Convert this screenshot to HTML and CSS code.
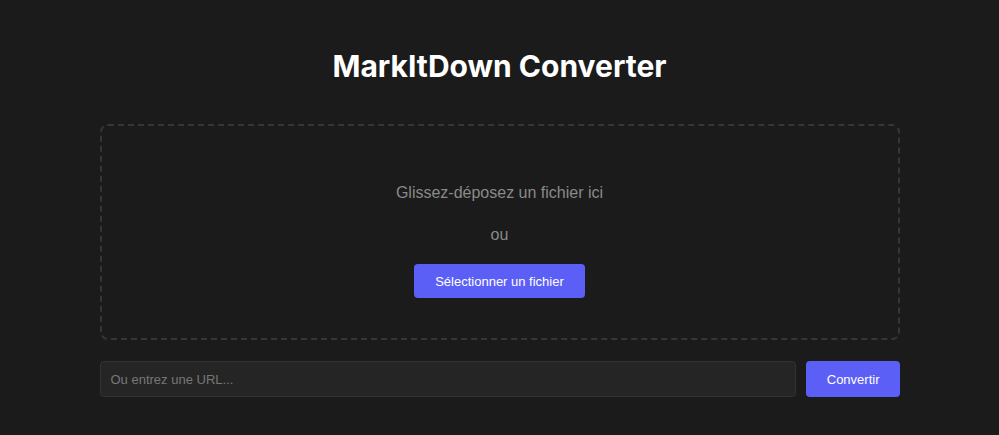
FILE: index.html
```html
<!DOCTYPE html>
<html lang="fr">
<head>
  <meta charset="UTF-8" />
  <title>MarkItDown Converter</title>
  <link rel="stylesheet" href="styles.css">
</head>
<body>

<div class="container">
  <h1>MarkItDown Converter</h1>

  <div class="dropzone" id="dropzone">
    <p class="drop-text">Glissez-déposez un fichier ici</p>
    <p class="drop-or">ou</p>
    <button class="btn btn-file" type="button">Sélectionner un fichier</button>
  </div>

  <div class="url-row">
    <input class="url-input" type="text" placeholder="Ou entrez une URL...">
    <button class="btn btn-convert" type="button">Convertir</button>
  </div>
</div>

</body>
</html>
```

FILE: styles.css
```css
* { box-sizing: border-box; }
body {
  margin: 0;
  background: #1b1b1b;
  font-family: 'Liberation Sans', Arial, sans-serif;
  color: #fff;
}

.container {
  width: 800px;
  margin: 0 auto;
}

h1 {
  font-family: Inter, 'Liberation Sans', sans-serif;
  font-size: 30px;
  font-weight: 700;
  line-height: 38px;
  text-align: center;
  margin: 47px 0 39px;
}

.dropzone {
  border: 2px dashed #363636;
  border-radius: 8px;
  padding: 40px 20px;
  text-align: center;
}

.drop-text, .drop-or {
  color: #8a8a8a;
  font-size: 16px;
  line-height: 20px;
  margin: 0;
}

.drop-text { margin-top: 17px; }
.drop-or { margin-top: 22px; }

.btn {
  background: #5c5ff6;
  color: #fff;
  border: none;
  border-radius: 4px;
  font-family: 'Liberation Sans', Arial, sans-serif;
  font-size: 13px;
  height: 34px;
  padding: 0 20px;
  cursor: pointer;
}

.btn-file {
  margin-top: 19px;
  padding: 0 21px;
}

.url-row {
  display: flex;
  gap: 10px;
  margin-top: 21px;
}

.url-input {
  flex: 1;
  height: 36px;
  background: #252525;
  border: 1px solid #333;
  border-radius: 4px;
  padding: 0 10px;
  color: #ddd;
  font-family: 'Liberation Sans', Arial, sans-serif;
  font-size: 13px;
}

.url-input::placeholder { color: #777; }

.btn-convert {
  height: 36px;
  padding: 0 20px 0 21px;
}
```
